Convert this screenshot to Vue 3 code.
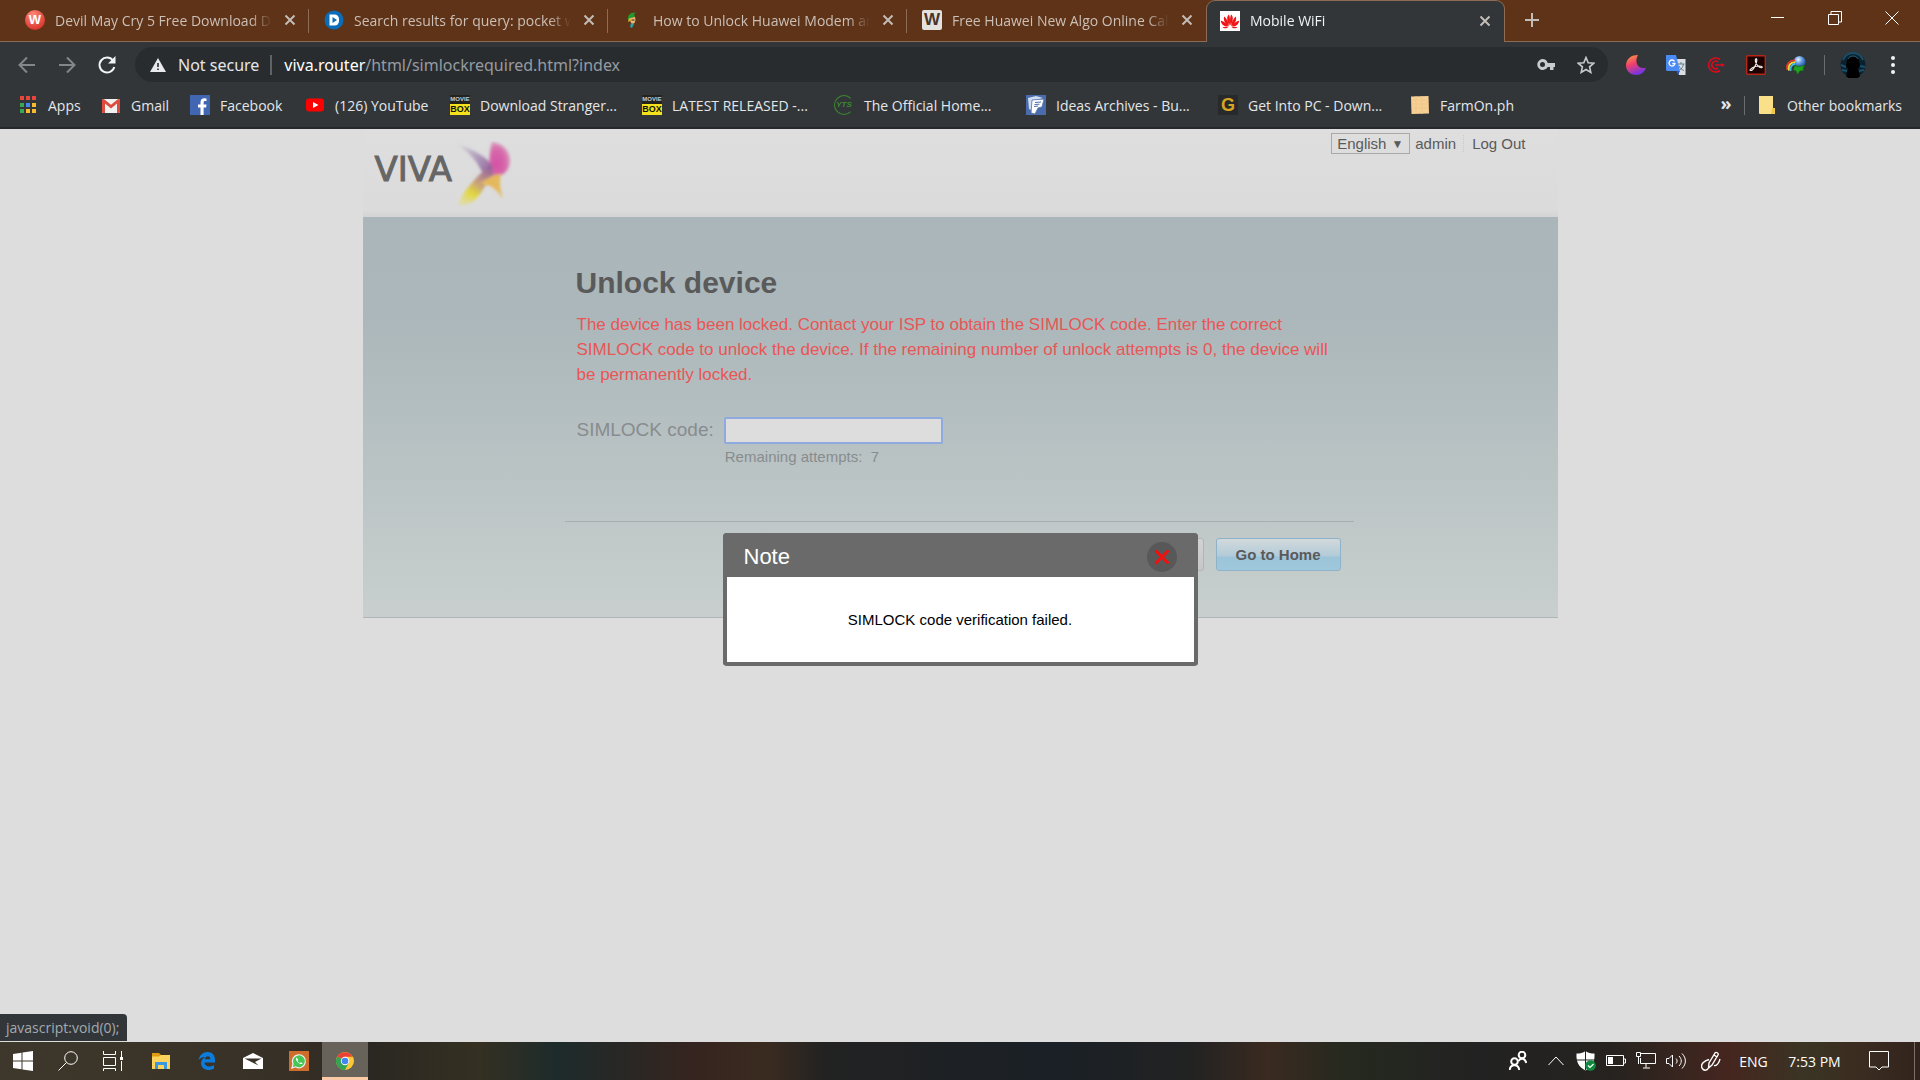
<script setup>
import { ref } from 'vue';

const tabs = [
  { badge: 'ball', letters: ['W'], title: 'Devil May Cry 5 Free Download Del' },
  { icon: 'fav-d', title: 'Search results for query: pocket wifi' },
  { icon: 'fav-elf', title: 'How to Unlock Huawei Modem and' },
  { badge: 'paper', letters: ['W'], title: 'Free Huawei New Algo Online Calcu' },
  { icon: 'fav-huawei', title: 'Mobile WiFi', active: true },
];

const bookmarks = [
  { icon: 'bm-apps', title: 'Apps' },
  { icon: 'bm-gmail', title: 'Gmail' },
  { icon: 'bm-facebook', title: 'Facebook' },
  { icon: 'bm-youtube', title: '(126) YouTube' },
  { badge: 'moviebox', letters: ['MOVIE', 'BOX'], title: 'Download Stranger...' },
  { badge: 'moviebox', letters: ['MOVIE', 'BOX'], title: 'LATEST RELEASED -...' },
  { badge: 'yts', letters: ['YTS'], title: 'The Official Home...' },
  { icon: 'bm-ideas', title: 'Ideas Archives - Bu...' },
  { badge: 'gold', letters: ['G'], title: 'Get Into PC - Down...' },
  { icon: 'bm-farm', title: 'FarmOn.ph' },
];

const extensions = ['ext-moon', 'ext-translate', 'ext-target', 'ext-pdf', 'ext-idm'];

const language = ref('English');
const code = ref('');
const noteOpen = ref(true);
</script>

<template>
  <svg class="sprite" aria-hidden="true">
    <defs>
      <linearGradient id="moon-fill" x1="0" y1="0" x2="0.4" y2="1">
        <stop offset="0" stop-color="#ffa040" />
        <stop offset="0.5" stop-color="#f0406a" />
        <stop offset="1" stop-color="#7a35e0" />
      </linearGradient>
      <radialGradient id="globe-fill" cx="0.4" cy="0.3" r="0.7">
        <stop offset="0" stop-color="#e8f4ff" />
        <stop offset="0.5" stop-color="#5b93dc" />
        <stop offset="1" stop-color="#1d4c94" />
      </radialGradient>
    </defs>

    <symbol id="fav-d" viewBox="0 0 20 20">
      <circle cx="10" cy="10" r="9.5" fill="#0b6cb8" />
      <path d="M5.500 4.500h5a4.500 4.500 0 0 1 4.500 4.500v2a4.500 4.500 0 0 1-4.500 4.500h-5z" fill="#fff" />
      <path d="M8.500 7l4.500 3-4.500 3z" fill="#0b6cb8" />
    </symbol>
    <symbol id="fav-elf" viewBox="0 0 20 20">
      <path d="M5 8c0-4 4-6 8-5l-2 1 1 3-5 1-2 3z" fill="#1f9a2c" />
      <path d="M7 8l5-1 .5 3-1 3-2 1-2-2z" fill="#f0b878" />
      <path d="M6 8l-1 4 2-1 1-2z" fill="#e8b020" />
      <path d="M8 13l3 1-2 4-2-1z" fill="#2aa0a8" />
      <path d="M8.500 10h3" stroke="#30231a" />
    </symbol>
    <symbol id="fav-huawei" viewBox="0 0 20 20">
      <rect width="20" height="20" fill="#fff" />
      <g fill="#f01414">
        <path d="M9.600 14.500C6.500 10 6.500 5 9 3.500c1.200 3 1.200 7 .6 11z" />
        <path d="M10.400 14.500c3.100-4.500 3.100-9.500.6-11-1.200 3-1.200 7-.6 11z" />
        <path d="M9 15C5 13 3 9 4.200 5.500 7 8 8.500 11 9 15z" />
        <path d="M11 15c4-2 6-6 4.800-9.500C13 8 11.500 11 11 15z" />
        <path d="M8.500 15.500C4.500 16 1 13.500.8 9.500 4 10.500 7 12.500 8.500 15.500z" />
        <path d="M11.500 15.500c4 .5 7.500-2 7.700-6-3.200 1-6.200 3-7.700 6z" />
        <path d="M8.500 16H2.500c1 1.500 4 2 6 0zM11.500 16h6c-1 1.500-4 2-6 0z" />
      </g>
    </symbol>

    <symbol id="bm-apps" viewBox="0 0 20 20">
      <path d="M2 1h4v4H2zM8 1h4v4H8zM14 1h4v4h-4z" fill="#e8453c" />
      <path d="M2 8h4v4H2zM2 14h4v4H2z" fill="#3aa757" />
      <path d="M8 8h4v4H8z" fill="#4688f1" />
      <path d="M14 8h4v4h-4zM8 14h4v4H8zM14 14h4v4h-4z" fill="#f9bb2d" />
    </symbol>
    <symbol id="bm-gmail" viewBox="0 0 20 20">
      <rect x="1" y="4" width="18" height="14" rx="1.500" fill="#f1f1f1" />
      <path d="M1 5.500v11A1.500 1.500 0 0 0 2.500 18H4V8.500l6 5 6-5V18h1.500a1.500 1.500 0 0 0 1.500-1.500v-11C19 4 17.500 3.500 16.500 4.500L10 9.800 3.500 4.500C2.500 3.500 1 4 1 5.500z" fill="#dd4b3e" />
    </symbol>
    <symbol id="bm-facebook" viewBox="0 0 20 20">
      <rect width="20" height="20" fill="#4267b2" />
      <path d="M10.500 20v-7.500H8V9.500h2.500V7.400C10.500 4.700 12 3.300 14.500 3.300l2 .1v2.700h-1.400c-1.200 0-1.500.6-1.500 1.500v1.900h2.900l-.4 3h-2.500V20z" fill="#fff" />
    </symbol>
    <symbol id="bm-youtube" viewBox="0 0 20 20">
      <rect x="1" y="3.500" width="18" height="13" rx="3" fill="#f00" />
      <path d="M8 7l5.500 3L8 13z" fill="#fff" />
    </symbol>
    <symbol id="bm-ideas" viewBox="0 0 20 20">
      <rect width="20" height="20" fill="#4a6cac" />
      <path d="M2 3l8-2 7 2-9 3-3 9-2-1z" fill="#cfdcf2" />
      <path d="M6 5l12-1-2 8-4 1-3 6-4-1z" fill="#fff" stroke="#4a6cac" stroke-width="0.800" />
      <path d="M9 7.500l6-.5M8.500 9.500l5-.3M8 11.500l4-.5" stroke="#4a6cac" />
    </symbol>
    <symbol id="bm-farm" viewBox="0 0 20 20">
      <path d="M1 1.500l17.500-.5.500 17.500-17.500.5z" fill="#f6cf94" />
      <path d="M1.500 5h17M1.500 9h17M1.500 13h17M6 1v18M12 1v18" stroke="#f1c68a" />
    </symbol>

    <symbol id="ext-moon" viewBox="0 0 20 20">
      <path d="M12 0C4 0 0 5 0 10.500 0 16 4.500 20 10 20c5 0 9-3 10-7.500-7 2.500-12.500-4.500-8-12.500z" fill="url(#moon-fill)" />
    </symbol>
    <symbol id="ext-translate" viewBox="0 0 20 20">
      <path d="M9 4h10.500v16H13z" fill="#dcdfe2" />
      <path d="M11.500 9h7M15 7v2M17.500 9c-.5 3-2 5-4 6M13 11c1 2 2.500 3.500 5 4.500" fill="none" stroke="#5f7c8c" />
      <path d="M0 0h10l4 16H1.500A1.500 1.500 0 0 1 0 14.500z" fill="#4a8af4" />
      <path d="M10.500 16H14l-2 4z" fill="#2a56c6" />
      <path d="M8.500 6.300A3 3 0 1 0 9 8.500H6.300" fill="none" stroke="#fff" stroke-width="1.300" />
    </symbol>
    <symbol id="ext-target" viewBox="0 0 20 20">
      <path d="M14 4.500a7 7 0 1 0 0 11M12 7a3.800 3.800 0 1 0 0 6M9 10h9" fill="none" stroke="#e1091c" stroke-width="1.600" />
      <path d="M15 8L19 10l-4 2z" fill="#e1091c" />
    </symbol>
    <symbol id="ext-pdf" viewBox="0 0 20 20">
      <rect x="0.700" y="0.700" width="18.600" height="18.600" rx="1" fill="#1c0404" stroke="#b62615" stroke-width="1.400" />
      <path d="M4 15c1.500-2.300 5-3.800 9-4 3 0 4 1.200 2.500 1.700-2 .4-5-2.500-6-6-.7-2.800 1-4 1.300-2 .2 2.800-2 7.800-4.300 10-1.200 1-2.500 1-2.500.3z" fill="none" stroke="#eee" stroke-width="1.200" />
    </symbol>
    <symbol id="ext-idm" viewBox="0 0 20 20">
      <circle cx="13.500" cy="7" r="6" fill="url(#globe-fill)" />
      <path d="M1.500 15C-.5 9 4 5 9 5.500" fill="none" stroke="#e8362c" stroke-width="1.800" />
      <path d="M3 15.500C1.500 10.500 5 7 9 7.300" fill="none" stroke="#f5dc2b" stroke-width="1.800" />
      <path d="M4.500 16C4 12 6 9 9 9" fill="none" stroke="#45b8ea" stroke-width="1.800" />
      <path d="M9 10l3 1.500 7-1-2 3 1 2-4 .5-2.500 3.500-1.500-3.500L7 15z" fill="#1fa21f" stroke="#0c5c12" stroke-width="0.600" />
    </symbol>
  </svg>

  <div class="screen">
    <header class="browser">
      <div class="tab-strip">
        <div v-for="tab in tabs" :key="tab.title" class="tab" :class="{ 'tab--active': tab.active }">
          <span v-if="tab.badge" class="icon badge" :class="'badge--' + tab.badge">
            <span v-for="line in tab.letters" :key="line">{{ line }}</span>
          </span>
          <svg v-else class="icon"><use :href="'#' + tab.icon" /></svg>
          <span class="tab-title">{{ tab.title }}</span>
          <button class="tab-close" aria-label="Close tab">
            <svg width="12" height="12" viewBox="0 0 12 12"><path d="M1.500 1.500l9 9M10.500 1.500l-9 9" /></svg>
          </button>
        </div>
        <button class="new-tab" aria-label="New tab">
          <svg width="16" height="16" viewBox="0 0 16 16"><path d="M8 1v14M1 8h14" /></svg>
        </button>
        <div class="window-controls">
          <button aria-label="Minimize">
            <svg width="14" height="14" viewBox="0 0 14 14"><path d="M0 6.500h13" /></svg>
          </button>
          <button aria-label="Restore">
            <svg width="14" height="14" viewBox="0 0 14 14"><path d="M.5 3.500h10v10H.5zM3 3V.5h10.500v10.500H11" /></svg>
          </button>
          <button aria-label="Close">
            <svg width="14" height="14" viewBox="0 0 14 14"><path d="M.5.5l13 13M13.500.5l-13 13" /></svg>
          </button>
        </div>
      </div>

      <div class="toolbar">
        <button class="nav" aria-label="Back">
          <svg width="20" height="20" viewBox="0 0 20 20"><path d="M18 10H3M10 2.500L2.500 10l7.500 7.500" /></svg>
        </button>
        <button class="nav" aria-label="Forward">
          <svg width="20" height="20" viewBox="0 0 20 20"><path d="M2 10h15M10 2.500l7.500 7.500-7.500 7.500" /></svg>
        </button>
        <button class="nav nav--reload" aria-label="Reload">
          <svg width="20" height="20" viewBox="0 0 20 20">
            <path d="M16 5.500A7.500 7.500 0 1 0 17.300 12" />
            <path d="M18.500 1v7.500H11z" class="solid" />
          </svg>
        </button>
        <div class="address">
          <svg width="16" height="14" viewBox="0 0 16 14">
            <path d="M8 0l8 14H0z" fill="#e8eaed" />
            <path d="M7.200 5h1.600v4H7.200zM7.200 10.500h1.600V12H7.200z" fill="#292c2f" />
          </svg>
          <span class="insecure">Not secure</span>
          <span class="url">viva.router<span class="url-path">/html/simlockrequired.html?index</span></span>
          <svg class="address-key" width="18" height="12" viewBox="0 0 18 12">
            <path d="M5.500 0a5.500 5.500 0 0 1 5.200 4H18v4h-1.500v3H13V8h-2.300A5.500 5.500 0 1 1 5.500 0zm0 3a2.500 2.500 0 1 0 0 5 2.500 2.500 0 0 0 0-5z" />
          </svg>
          <svg width="18" height="18" viewBox="0 0 18 18">
            <path d="M9 1.500l2.200 5.200 5.600.5-4.200 3.700 1.200 5.500L9 13.500l-4.800 2.900 1.200-5.500-4.200-3.700 5.600-.5z" fill="none" stroke="#c8cbce" stroke-width="1.600" />
          </svg>
        </div>
        <div class="extensions">
          <svg v-for="name in extensions" :key="name" class="icon"><use :href="'#' + name" /></svg>
        </div>
        <svg class="avatar" width="26" height="26" viewBox="0 0 26 26">
          <circle cx="13" cy="13" r="12.500" fill="#0a2230" />
          <path d="M3 8c2-5 6-7 10-7s8 2 10 7M1 13l5 2M25 15l-5-1M2 18l5 1M19 19l5-1" fill="none" stroke="#1a4f6a" stroke-width="2" />
          <path d="M7 8c1.500-4.500 10.500-4.500 12 0l1 6-2 3 2 7.500a12 12 0 0 1-14 0L8 17l-2-3z" fill="#000" />
          <path d="M8 7c2-4 8-4 10 0" fill="none" stroke="#2d5f78" />
        </svg>
        <button class="menu-dots" aria-label="Menu">
          <svg width="4" height="18" viewBox="0 0 4 18">
            <circle cx="2" cy="2" r="2" /><circle cx="2" cy="9" r="2" /><circle cx="2" cy="16" r="2" />
          </svg>
        </button>
      </div>

      <nav class="bookmarks">
        <a v-for="item in bookmarks" :key="item.title" class="bookmark" href="#">
          <span v-if="item.badge" class="icon badge" :class="'badge--' + item.badge">
            <span v-for="line in item.letters" :key="line">{{ line }}</span>
          </span>
          <svg v-else class="icon"><use :href="'#' + item.icon" /></svg>
          <span>{{ item.title }}</span>
        </a>
        <button class="bookmarks-more" aria-label="More bookmarks">»</button>
        <a class="bookmark bookmark--other" href="#">
          <svg width="16" height="18" viewBox="0 0 16 18">
            <path d="M0 0h14v12h2v6H1a1 1 0 0 1-1-1z" fill="#fbe08a" />
            <path d="M13 12h3v5l-1.500 1H12z" fill="#eec846" />
          </svg>
          <span>Other bookmarks</span>
        </a>
      </nav>
    </header>

    <main class="page">
      <div class="site">
        <div class="site-header">
          <div class="logo">
            <span class="logo-name">VIVA</span>
            <svg class="logo-mark" width="56" height="66" viewBox="0 0 56 66">
              <defs>
                <filter id="soft" x="-20%" y="-20%" width="140%" height="140%">
                  <feGaussianBlur stdDeviation="1.500" />
                </filter>
                <linearGradient id="wing" x1="0" y1="0" x2="1" y2="0.700">
                  <stop offset="0" stop-color="#8a78a8" stop-opacity="0.100" />
                  <stop offset="1" stop-color="#94649c" />
                </linearGradient>
                <linearGradient id="tail" x1="0.700" y1="0" x2="0.200" y2="1">
                  <stop offset="0" stop-color="#94649c" />
                  <stop offset="0.400" stop-color="#c49a80" />
                  <stop offset="0.700" stop-color="#e2d73e" />
                  <stop offset="1" stop-color="#e2dc70" stop-opacity="0.500" />
                </linearGradient>
                <radialGradient id="petal" cx="0.350" cy="0.650" r="0.700">
                  <stop offset="0" stop-color="#d452a4" />
                  <stop offset="0.600" stop-color="#d668aa" />
                  <stop offset="1" stop-color="#dba4c0" />
                </radialGradient>
              </defs>
              <g filter="url(#soft)">
                <path d="M2 4c13 3 25 10 35 20l-3 15c-5-3-9-10-13-17C15 14 9 8 2 4z" fill="url(#wing)" />
                <path d="M36 1c12 2 19 10 18 21-1 7-6 12-12 13l-8-1c-1-10-1-24 2-33z" fill="url(#petal)" />
                <path d="M36 22l1 13-8 10C23 56 16 65 2 64c4-12 12-20 20-29z" fill="url(#tail)" />
                <path d="M24 42c7-4 13-9 21-9-2 9-1 15 2 25-5-7-10-14-18-14z" fill="#e4b85c" />
              </g>
            </svg>
          </div>
          <div class="account">
            <div class="language">
              <select v-model="language" aria-label="Language">
                <option>English</option>
              </select>
              <span class="language-arrow">▼</span>
            </div>
            <a href="#" class="account-user">admin</a>
            <a href="#" class="account-logout">Log Out</a>
          </div>
        </div>

        <section class="panel">
          <form class="unlock" @submit.prevent>
            <h1>Unlock device</h1>
            <p class="warning">
              The device has been locked. Contact your ISP to obtain the SIMLOCK code. Enter the correct
              SIMLOCK code to unlock the device. If the remaining number of unlock attempts is 0, the device will
              be permanently locked.
            </p>
            <div class="field">
              <label for="simlock">SIMLOCK code:</label>
              <div>
                <input id="simlock" v-model="code" type="text" />
                <p class="attempts">Remaining attempts:&nbsp; 7</p>
              </div>
            </div>
            <div class="actions">
              <button type="submit" class="action action--disabled" disabled aria-label="Apply"></button>
              <button type="button" class="action">Go to Home</button>
            </div>
          </form>
        </section>
      </div>

      <div v-if="noteOpen" class="note" role="dialog" aria-labelledby="note-title">
        <div class="note-header">
          <h2 id="note-title">Note</h2>
          <button class="note-close" aria-label="Close" @click="noteOpen = false">
            <svg width="16" height="16" viewBox="0 0 16 16"><path d="M1.500 1.500l13 13M14.500 1.500l-13 13" /></svg>
          </button>
        </div>
        <p class="note-body">SIMLOCK code verification failed.</p>
      </div>

      <div class="status">javascript:void(0);</div>
    </main>

    <footer class="taskbar">
      <button class="task" aria-label="Start">
        <svg width="20" height="20" viewBox="0 0 20 20">
          <path d="M0 3l8.500-1.200v7.700H0zM9.500 1.600L20 0v9.500H9.500zM0 10.500h8.500v7.700L0 17zM9.500 10.500H20V20L9.500 18.400z" fill="#fff" />
        </svg>
      </button>
      <button class="task" aria-label="Search">
        <svg class="line" width="20" height="20" viewBox="0 0 20 20">
          <circle cx="13" cy="7" r="6.300" /><path d="M8.500 11.500L.5 19.500" />
        </svg>
      </button>
      <button class="task" aria-label="Task view">
        <svg class="line" width="20" height="20" viewBox="0 0 20 20">
          <path d="M.5 0v3.500h12V0M.5 6.500h12v8H.5zM.5 20v-2.500h12V20M18.500 0v6M18.500 10v10" />
          <rect x="17.500" y="6.500" width="2" height="2" fill="#fff" />
        </svg>
      </button>
      <div class="task-apps">
        <button class="task" aria-label="File Explorer">
          <svg width="18" height="16" viewBox="0 0 18 16">
            <path d="M0 0h7l2 2v3H0z" fill="#e09c10" />
            <path d="M0 3.500h7L9 2h9v14H0z" fill="#fcd45c" />
            <path d="M3 16V9h12v7h-3v-4H6v4z" fill="#3a98e0" />
          </svg>
        </button>
        <button class="task" aria-label="Edge">
          <svg width="18" height="18" viewBox="0 0 18 18">
            <path d="M.5 8C1.500 3 5 0 9.500 0c5 0 7.500 3.500 7.500 8v2.500H6.500c.3 4.500 5.500 5 9.500 2.500v3.500c-5 3-12.500 1.500-13-5C3 8.500 5 6 7.500 5 4.500 5 2 6.200.5 8zm6.300-.7h5.600c0-4-5-4-5.600 0z" fill="#0b7bdc" />
          </svg>
        </button>
        <button class="task" aria-label="Mail">
          <svg width="20" height="16" viewBox="0 0 20 16">
            <path d="M0 5l10-5 10 5v11H0z" fill="#fff" />
            <path d="M1.500 5.500h17L12 9l3.500 3.500z" fill="#383228" />
          </svg>
        </button>
        <button class="task" aria-label="WhatsApp">
          <svg width="20" height="20" viewBox="0 0 20 20">
            <rect width="20" height="20" fill="#cf6e2c" />
            <path d="M3 17l1-4a6.500 6.500 0 1 1 2.500 2.800z" fill="#45c655" stroke="#f2f2f2" stroke-width="1.200" />
            <path d="M7.500 6.500c-1 1-.5 3 1.200 4.700s4 2.500 5 1.200l-1.700-1.200-1 .8c-1-.3-2-1.300-2.400-2.300l.7-1z" fill="#fff" />
          </svg>
        </button>
        <button class="task task--active" aria-label="Chrome">
          <svg width="18" height="18" viewBox="0 0 18 18">
            <circle cx="9" cy="9" r="9" fill="#fcc934" />
            <path d="M9 9L1.200 4.500A9 9 0 0 1 16.800 4.800H9z" fill="#e94235" />
            <path d="M9 9L1.200 4.500A9 9 0 0 0 9 18l3.600-6.800z" fill="#34a353" />
            <circle cx="9" cy="9" r="4.200" fill="#fff" />
            <circle cx="9" cy="9" r="3.300" fill="#4285f4" />
          </svg>
        </button>
      </div>

      <div class="tray">
        <span class="tray-item tray-item--people">
          <svg class="line line--bold" width="18" height="20" viewBox="0 0 18 20">
            <circle cx="13" cy="4" r="3.300" /><path d="M9.500 10C11 7 16 6.500 17.300 12" />
            <circle cx="5.500" cy="10.500" r="3.300" /><path d="M.7 19c.5-6.500 9-6.500 9.500 0" />
          </svg>
        </span>
        <span class="tray-item">
          <svg class="line" width="16" height="10" viewBox="0 0 16 10"><path d="M.5 9L8 1l7.500 8" /></svg>
        </span>
        <span class="tray-item">
          <svg width="20" height="20" viewBox="0 0 20 20">
            <path d="M9.500 0C12 2 15 2.500 18.500 2.500c.5 8-2 13.500-9 17C2.500 16 0 10.500.5 2.500 4 2.500 7 2 9.500 0z" fill="#fff" />
            <path d="M9.500 0v19M.5 9h18" stroke="#222" />
            <circle cx="14.500" cy="14.500" r="5.300" fill="#10893e" />
            <path d="M12 14.500l2 2 3.500-3.500" fill="none" stroke="#fff" stroke-width="1.200" />
          </svg>
        </span>
        <span class="tray-item">
          <svg class="line" width="20" height="12" viewBox="0 0 20 12">
            <path d="M.5.5h17v10H.5zM18 4h1.500v4H18" /><rect x="2.500" y="2.500" width="4" height="6" fill="#fff" />
          </svg>
        </span>
        <span class="tray-item">
          <svg class="line" width="20" height="18" viewBox="0 0 20 18">
            <path d="M5 1.500h14.500v10H4.500V6M10 11.500v4M7 16h7M.5.5h4v4h-4zM2.500 4.500V12" />
          </svg>
        </span>
        <span class="tray-item">
          <svg class="line" width="20" height="18" viewBox="0 0 20 18">
            <path d="M.5 6.500h2.500L6.500 3v12L3 11.500H.5zM10 6.500c1.500 1.500 1.500 3.500 0 5M13 4c3 3 3 7 0 10M16 1.500c4.500 4.500 4.500 10.500 0 15" />
          </svg>
        </span>
        <span class="tray-item tray-item--wide">
          <svg class="line" width="20" height="20" viewBox="0 0 20 20">
            <path d="M7.500 17L8 12 14 2c1-1.500 4 .2 3 2L11 14zM13 4l3 2M8 8.500C3 10-.5 13 .8 16.500 2 20 6 20 7.500 17M13 14.500c2.500.5 5-2.500 6-6.500" stroke-width="1.400" />
          </svg>
        </span>
        <span class="tray-text">ENG</span>
        <span class="tray-text tray-text--clock">7:53 PM</span>
        <span class="tray-item tray-item--action">
          <svg class="line" width="20" height="20" viewBox="0 0 20 20"><path d="M.5.5h19v15.500H13L10 19l-3-3H.5z" /></svg>
        </span>
        <span class="show-desktop"></span>
      </div>
    </footer>
  </div>
</template>

<style>
body {
  margin: 0;
}
</style>

<style scoped>
.sprite {
  position: absolute;
  width: 0;
  height: 0;
}

.screen {
  display: flex;
  flex-direction: column;
  min-height: 100vh;
  overflow: hidden;
  font-family: "Open Sans", "Noto Sans", sans-serif;
  font-size: 14px;
}

button {
  display: flex;
  align-items: center;
  justify-content: center;
  padding: 0;
  border: none;
  background: none;
  font: inherit;
  color: inherit;
}

svg {
  flex: none;
}

.icon {
  flex: none;
  width: 20px;
  height: 20px;
}

/* lettered site icons */
.badge {
  display: flex;
  flex-direction: column;
  justify-content: center;
  text-align: center;
  font-family: "Liberation Sans", sans-serif;
  font-weight: bold;
  line-height: 20px;
}

.badge--ball {
  border-radius: 50%;
  background: radial-gradient(circle at 40% 25%, #ff8a78, #cf1d18);
  font-size: 13px;
  color: #fff;
}

.badge--paper {
  border-radius: 2px;
  background: #e4e2de;
  font-size: 17px;
  color: #4a3428;
}

.badge--moviebox {
  background: linear-gradient(#24231e 45%, #f3e21c 45%);
  font-size: 6px;
  line-height: 9px;
  color: #ccc;
}

.badge--moviebox span:last-child {
  font-size: 9px;
  line-height: 11px;
  color: #111;
}

.badge--yts {
  box-sizing: border-box;
  border: 1px solid #3c8a2e;
  border-right-color: transparent;
  border-radius: 50%;
  font-size: 8px;
  font-style: italic;
  line-height: 18px;
  color: #3c8a2e;
}

.badge--gold {
  background: #28292a;
  font-size: 18px;
  color: #d8a520;
}

/* browser chrome */
.browser {
  background: #323639;
  color: #e4e6e9;
  border-bottom: 2px solid #26292c;
}

.tab-strip {
  display: flex;
  height: 42px;
  padding-left: 10px;
  background: #5e3318;
  box-shadow: inset 0 -1px #8d6b55;
}

.tab {
  display: flex;
  align-items: center;
  box-sizing: border-box;
  flex: 0 1 299px;
  min-width: 0;
  padding: 0 13px 2px 15px;
  color: #cbbfb6;
  background: linear-gradient(#8d6b55, #8d6b55) right 9px / 1px 24px no-repeat;
}

.tab:nth-child(4) {
  background: none;
}

.tab--active {
  color: #f1f3f4;
  background: #323639;
  padding-left: 13px;
  border: 1px solid #8d6b55;
  border-bottom: none;
  border-radius: 9px 9px 0 0;
}

.tab-title {
  flex: 1;
  margin: 0 12px 0 10px;
  overflow: hidden;
  white-space: nowrap;
  mask-image: linear-gradient(to right, #000 90%, transparent);
}

.tab-close svg,
.new-tab svg {
  fill: none;
  stroke: #c4bcb6;
  stroke-width: 2;
}

.new-tab {
  width: 54px;
  padding-bottom: 2px;
}

.window-controls {
  display: flex;
  margin-left: auto;
}

.window-controls button {
  width: 57px;
  height: 36px;
}

.window-controls svg {
  fill: none;
  stroke: #fff;
}

.toolbar {
  display: flex;
  align-items: center;
  height: 45px;
  padding-left: 7px;
}

.nav {
  width: 40px;
}

.nav svg {
  fill: none;
  stroke: #84878a;
  stroke-width: 2;
}

.nav--reload svg {
  stroke: #f1f3f4;
}

.nav--reload .solid {
  fill: #f1f3f4;
  stroke: none;
}

.address {
  display: flex;
  align-items: center;
  flex: 1;
  height: 35px;
  margin-left: 8px;
  padding: 0 13px 0 15px;
  border-radius: 18px;
  background: #292c2f;
  font-family: "Noto Sans", "Open Sans", sans-serif;
  font-size: 16px;
}

.insecure {
  margin-left: 12px;
  padding-right: 11px;
  border-right: 2px solid #5f6368;
  line-height: 20px;
}

.url {
  margin-left: 12px;
  color: #fff;
}

.url-path {
  color: #969ba1;
}

.address-key {
  margin: 0 22px 0 auto;
  fill: #c8cbce;
}

.extensions {
  display: flex;
  gap: 20px;
  margin-left: 18px;
  padding-right: 18px;
  border-right: 1px solid #6a6d70;
}

.avatar {
  margin-left: 15px;
}

.menu-dots {
  width: 54px;
}

.menu-dots svg {
  fill: #f1f3f4;
}

.bookmarks {
  display: grid;
  grid-template-columns: 83px 89px 115px 145px repeat(5, 192px) 1fr auto auto;
  align-items: center;
  height: 36px;
  padding: 0 18px 4px;
}

.bookmark {
  display: flex;
  align-items: center;
  gap: 10px;
  color: inherit;
  text-decoration: none;
  white-space: nowrap;
}

.bookmarks-more {
  width: 36px;
  padding-bottom: 4px;
  font-size: 18px;
  font-weight: bold;
}

.bookmark--other {
  gap: 12px;
  padding-left: 14px;
  border-left: 1px solid #6a6d70;
}

/* router page */
.page {
  position: relative;
  flex: 1;
  background: #ddd;
  font-family: "Liberation Sans", Arial, sans-serif;
  font-size: 15px;
  color: #5a5a5a;
}

.site {
  max-width: 1195px;
  margin: 0 auto;
}

.site-header {
  display: flex;
  justify-content: space-between;
  align-items: flex-start;
  height: 88px;
  background: linear-gradient(#dedede, #dbdbdb 92%, #d4d4d4);
}

.logo {
  display: flex;
  align-items: center;
  padding: 12px 0 0 12px;
}

.logo-name {
  margin-bottom: 10px;
  font-family: "DejaVu Sans", sans-serif;
  font-size: 34px;
  line-height: 52px;
  color: #666;
  -webkit-text-stroke: 1px #666;
}

.logo-mark {
  margin-left: 4px;
}

.account {
  display: flex;
  align-items: center;
  margin: 4px 32px 0 0;
}

.account a {
  color: inherit;
  text-decoration: none;
}

.language {
  display: flex;
  align-items: center;
  box-sizing: border-box;
  width: 79px;
  height: 21px;
  padding: 0 6px 0 5px;
  border: 1px solid #a9a9a9;
}

.language select {
  flex: 1;
  min-width: 0;
  padding: 0;
  border: none;
  appearance: none;
  background: none;
  font: inherit;
  color: inherit;
}

.language-arrow {
  font-size: 12px;
  pointer-events: none;
}

.account-user {
  margin-left: 5px;
  padding-right: 7px;
  border-right: 1px dotted #c8c8c8;
}

.account-logout {
  margin-left: 8px;
}

.panel {
  padding: 48px 204px 46px 202px;
  border-bottom: 1px solid #b0b6b8;
  background: linear-gradient(#aab6b9, #abb7ba 25%, #c8cfce);
}

.unlock h1 {
  margin: 0;
  padding-left: 11px;
  font-size: 30px;
  line-height: 36px;
}

.warning {
  max-width: 774px;
  margin: 11px 0 0 12px;
  font-size: 17px;
  line-height: 25px;
  color: #e85656;
}

.field {
  display: flex;
  align-items: flex-start;
  gap: 10px;
  margin: 30px 0 0 12px;
  color: #888c8e;
}

.field label {
  font-size: 19px;
  line-height: 25px;
}

.field input {
  display: block;
  box-sizing: border-box;
  width: 219px;
  height: 27px;
  padding: 0 4px;
  border: 2px solid #8faade;
  border-radius: 2px;
  background: #ddd;
  font: inherit;
}

.attempts {
  margin: 3px 0 0 1px;
  line-height: 20px;
}

.actions {
  display: flex;
  justify-content: flex-end;
  gap: 12px;
  margin-top: 54px;
  padding: 16px 13px 0;
  border-top: 1px solid #a9aeb0;
}

.action {
  width: 125px;
  height: 33px;
  border: 1px solid #8fb2cb;
  border-radius: 3px;
  background: linear-gradient(#d2d9dc, #b2cbd8 55%, #9cc4d9 58%, #a0c8dc);
  font-weight: bold;
}

.action--disabled {
  border-color: #b4b4b6;
  background: linear-gradient(#d0d2d3, #c6c6c8);
}

.note {
  position: absolute;
  top: 404px;
  left: 0;
  right: 0;
  box-sizing: border-box;
  width: 475px;
  margin: 0 auto;
  border: 4px solid #6a6a6a;
  border-top: none;
  border-radius: 4px;
  background: #fff;
}

.note-header {
  display: flex;
  align-items: center;
  justify-content: space-between;
  box-sizing: border-box;
  height: 44px;
  margin: 0 -4px;
  padding: 4px 21px 0;
  border-radius: 4px 4px 0 0;
  background: #6a6a6a;
  color: #fff;
}

.note-header h2 {
  margin: 0;
  font-size: 22px;
  font-weight: normal;
}

.note-close {
  width: 30px;
  height: 30px;
  border-radius: 50%;
  background: #585858;
}

.note-close svg {
  fill: none;
  stroke: #f01010;
  stroke-width: 3;
}

.note-body {
  margin: 0;
  padding: 33px 0 32px;
  line-height: 20px;
  text-align: center;
  color: #000;
}

.status {
  position: absolute;
  left: 0;
  bottom: 1px;
  padding: 0 8px 0 6px;
  border-radius: 0 4px 0 0;
  background: #323639;
  font-family: "Open Sans", "Noto Sans", sans-serif;
  font-size: 14px;
  line-height: 27px;
  color: #a4a9ae;
}

/* taskbar */
.taskbar {
  display: flex;
  height: 38px;
  color: #fff;
  background: linear-gradient(
    to right,
    #3e382c,
    #373026 15%,
    #2a2722 19%,
    #343022 25%,
    #1d2b2b 29%,
    #35241f 36%,
    #3a2b20 40%,
    #222 43%,
    #1a2026 55%,
    #222 62%,
    #3a2a20 66%,
    #26291f 70%,
    #222 77%,
    #26231f 84%,
    #45261f 90%,
    #3a3424 94%,
    #3a2c20 97%,
    #32241c
  );
}

.task {
  width: 45px;
  height: 38px;
}

.task-apps {
  display: flex;
  margin-left: 3px;
}

.task-apps .task {
  width: 46px;
}

.task--active {
  background: #67635a;
  box-shadow: inset 0 -3px #fbcba8;
}

.line {
  fill: none;
  stroke: #fff;
}

.line--bold {
  stroke-width: 2;
}

.tray {
  display: flex;
  align-items: center;
  margin-left: auto;
}

.tray-item {
  display: flex;
  justify-content: center;
  width: 30px;
}

.tray-item--people {
  width: 46px;
}

.tray-item--wide {
  width: 40px;
}

.tray-item--action {
  width: 52px;
}

.tray-text {
  width: 45px;
  text-align: center;
}

.tray-text--clock {
  width: 77px;
}

.show-desktop {
  align-self: stretch;
  width: 5px;
  margin-left: 9px;
  border-left: 1px solid #7a7068;
}
</style>
